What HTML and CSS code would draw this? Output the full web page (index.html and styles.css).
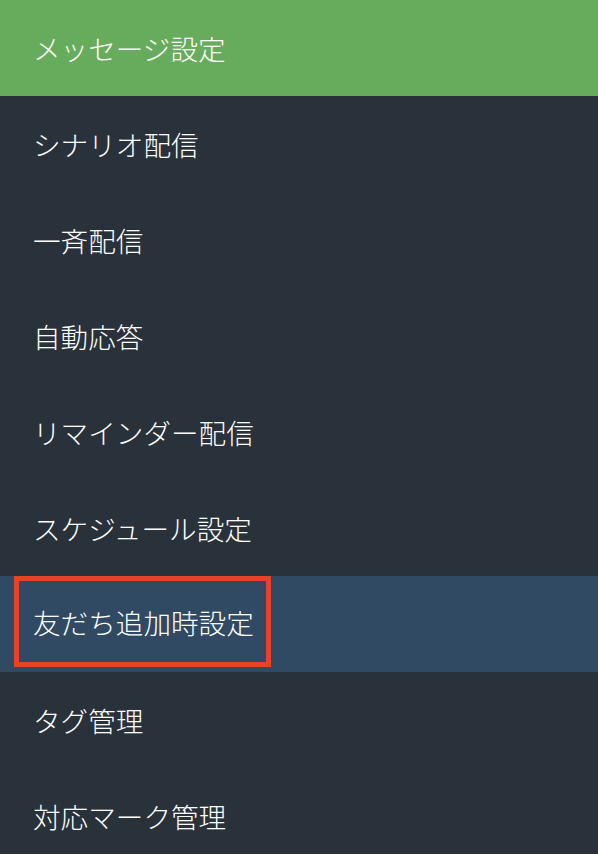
FILE: index.html
```html
<!DOCTYPE html>
<html lang="ja">
<head>
<meta charset="utf-8">
<link rel="stylesheet" href="styles.css">
</head>
<body>
<nav class="menu">
  <div class="menu-header">メッセージ設定</div>
  <ul class="menu-list">
    <li class="menu-item">シナリオ配信</li>
    <li class="menu-item">一斉配信</li>
    <li class="menu-item">自動応答</li>
    <li class="menu-item">リマインダー配信</li>
    <li class="menu-item">スケジュール設定</li>
    <li class="menu-item active"><span class="marked">友だち追加時設定</span></li>
    <li class="menu-item">タグ管理</li>
    <li class="menu-item">対応マーク管理</li>
  </ul>
</nav>
</body>
</html>
```
FILE: styles.css
```css
html, body {
  margin: 0;
  padding: 0;
  background: #29313a;
}
.menu {
  width: 598px;
  font-family: "Noto Sans CJK JP", "Noto Sans", sans-serif;
  font-weight: 300;
  color: #ffffff;
}
.menu-header {
  height: 96px;
  background: #67ac5c;
  display: flex;
  align-items: center;
  padding-left: 33px;
  font-size: 27.6px;
  box-sizing: border-box;
}
.menu-list {
  list-style: none;
  margin: 0;
  padding: 0;
}
.menu-item {
  height: 96px;
  display: flex;
  align-items: center;
  padding-left: 33px;
  font-size: 27.6px;
  box-sizing: border-box;
  background: #29313a;
}
.menu-item.active {
  background: #2f4a62;
  padding-left: 14px;
  align-items: flex-start;
}
.marked {
  display: flex;
  align-items: center;
  width: 257px;
  height: 91px;
  box-sizing: border-box;
  padding-left: 14px;
  border: 5px solid #e8432a;
  white-space: nowrap;
}
```
